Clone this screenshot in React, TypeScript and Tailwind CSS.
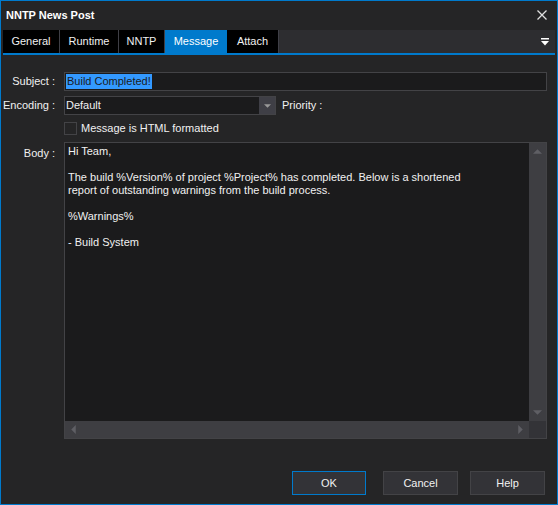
import React from "react";

const FONT = { fontFamily: '"Liberation Sans", Arial, sans-serif' };

const TABS = [
  { label: "General", w: "w-[57px]" },
  { label: "Runtime", w: "w-[59px]" },
  { label: "NNTP", w: "w-[46px]" },
  { label: "Message", w: "w-[62px]" },
  { label: "Attach", w: "w-[52px]" },
];

function Tri({ dir, className }: { dir: "up" | "down" | "left" | "right"; className?: string }) {
  const pts = {
    up: "0,5 5,0 10,5",
    down: "0,0 10,0 5,5",
    left: "5,0 5,10 0,5",
    right: "0,0 0,10 5,5",
  }[dir];
  const vb = dir === "up" || dir === "down" ? "0 0 10 5" : "0 0 5 10";
  return (
    <svg viewBox={vb} className={className}>
      <polygon points={pts} fill="currentColor" />
    </svg>
  );
}

export default function App() {
  return (
    <div
      className="w-[558px] h-[505px] border border-[#007acc] bg-[#252526] text-[11px] text-[#f1f1f1] flex flex-col"
      style={FONT}
    >
      {/* title bar */}
      <div className="h-[28px] flex items-center justify-between pl-[5px] pr-[10px]">
        <span className="font-bold text-[11px] text-white">NNTP News Post</span>
        <svg viewBox="0 0 10 10" className="w-[10px] h-[10px] text-[#e0e0e0]">
          <path d="M0.5 0.5 L9.5 9.5 M9.5 0.5 L0.5 9.5" stroke="currentColor" strokeWidth="1.3" />
        </svg>
      </div>

      {/* tabs */}
      <div className="mt-[1px] mx-[2px]">
        <div className="h-[23px] flex bg-[#2d2d30]">
          {TABS.map((t) => (
            <div
              key={t.label}
              className={
                t.label === "Message"
                  ? `${t.w} h-full flex items-center justify-center bg-[#007acc] text-white`
                  : `${t.w} h-full flex items-center justify-center bg-[#000000] text-[#f1f1f1] border-r border-[#3f3f46]`
              }
            >
              {t.label}
            </div>
          ))}
          <div className="flex-1 flex items-center justify-end pr-[6px]">
            <svg viewBox="0 0 8 8" className="w-[8px] h-[8px] text-white">
              <rect x="0" y="0" width="8" height="1.5" fill="currentColor" />
              <polygon points="0,3 8,3 4,7.5" fill="currentColor" />
            </svg>
          </div>
        </div>
        <div className="h-[2px] bg-[#007acc]" />
      </div>

      {/* form */}
      <div className="flex flex-col pt-[17px] pr-[10px]">
        <div className="flex items-center h-[19px]">
          <label className="w-[55px] text-right pr-[1px] whitespace-nowrap">Subject :</label>
          <div className="ml-[8px] flex-1 h-[19px] border border-[#434346] bg-[#1b1b1c] flex items-center pl-[1px]">
            <span className="bg-[#3399ff] text-[#1b1b1c] leading-[15px] px-[1px]">Build Completed!</span>
          </div>
        </div>

        <div className="flex items-center h-[19px] mt-[5px]">
          <label className="w-[55px] text-right pr-[1px] whitespace-nowrap">Encoding :</label>
          <div className="ml-[8px] w-[212px] h-[19px] border border-[#434346] bg-[#1b1b1c] flex">
            <span className="flex-1 pl-[1px] leading-[17px]">Default</span>
            <div className="w-[16px] h-full bg-[#3f3f46] flex items-center justify-center">
              <Tri dir="down" className="w-[7px] h-[4px] text-[#999999]" />
            </div>
          </div>
          <span className="ml-[6px]">Priority :</span>
        </div>

        <div className="flex items-center h-[16px] mt-[5px] ml-[63px]">
          <div className="w-[13px] h-[13px] border border-[#434346] bg-[#252526]" />
          <span className="ml-[4px]">Message is HTML formatted</span>
        </div>

        <div className="flex mt-[6px]">
          <label className="w-[55px] text-right pr-[1px] pt-[3px]">Body :</label>
          <div className="ml-[8px] flex-1 h-[297px] border border-[#434346] bg-[#1b1b1c] flex flex-col">
            <div className="flex flex-1">
              <div className="flex-1 pl-[3px] pt-[2px] leading-[13px] whitespace-pre">
                {"Hi Team,\n\nThe build %Version% of project %Project% has completed. Below is a shortened\nreport of outstanding warnings from the build process.\n\n%Warnings%\n\n- Build System"}
              </div>
              <div className="w-[17px] bg-[#3e3e42] flex flex-col items-center justify-between py-[6px]">
                <Tri dir="up" className="w-[9px] h-[5px] text-[#5f5f64]" />
                <Tri dir="down" className="w-[9px] h-[5px] text-[#5f5f64]" />
              </div>
            </div>
            <div className="h-[17px] flex">
              <div className="flex-1 bg-[#3e3e42] flex items-center justify-between px-[6px]">
                <Tri dir="left" className="w-[5px] h-[9px] text-[#5f5f64]" />
                <Tri dir="right" className="w-[5px] h-[9px] text-[#5f5f64]" />
              </div>
              <div className="w-[17px] bg-[#333337]" />
            </div>
          </div>
        </div>
      </div>

      {/* buttons */}
      <div className="flex justify-end pr-[12px] mt-[32px]">
        <button className="w-[74px] h-[24px] border border-[#007acc] bg-[#333337] text-[#f1f1f1]">OK</button>
        <button className="ml-[17px] w-[75px] h-[24px] border border-[#434346] bg-[#333337] text-[#f1f1f1]">Cancel</button>
        <button className="ml-[12px] w-[75px] h-[24px] border border-[#434346] bg-[#333337] text-[#f1f1f1]">Help</button>
      </div>
    </div>
  );
}
